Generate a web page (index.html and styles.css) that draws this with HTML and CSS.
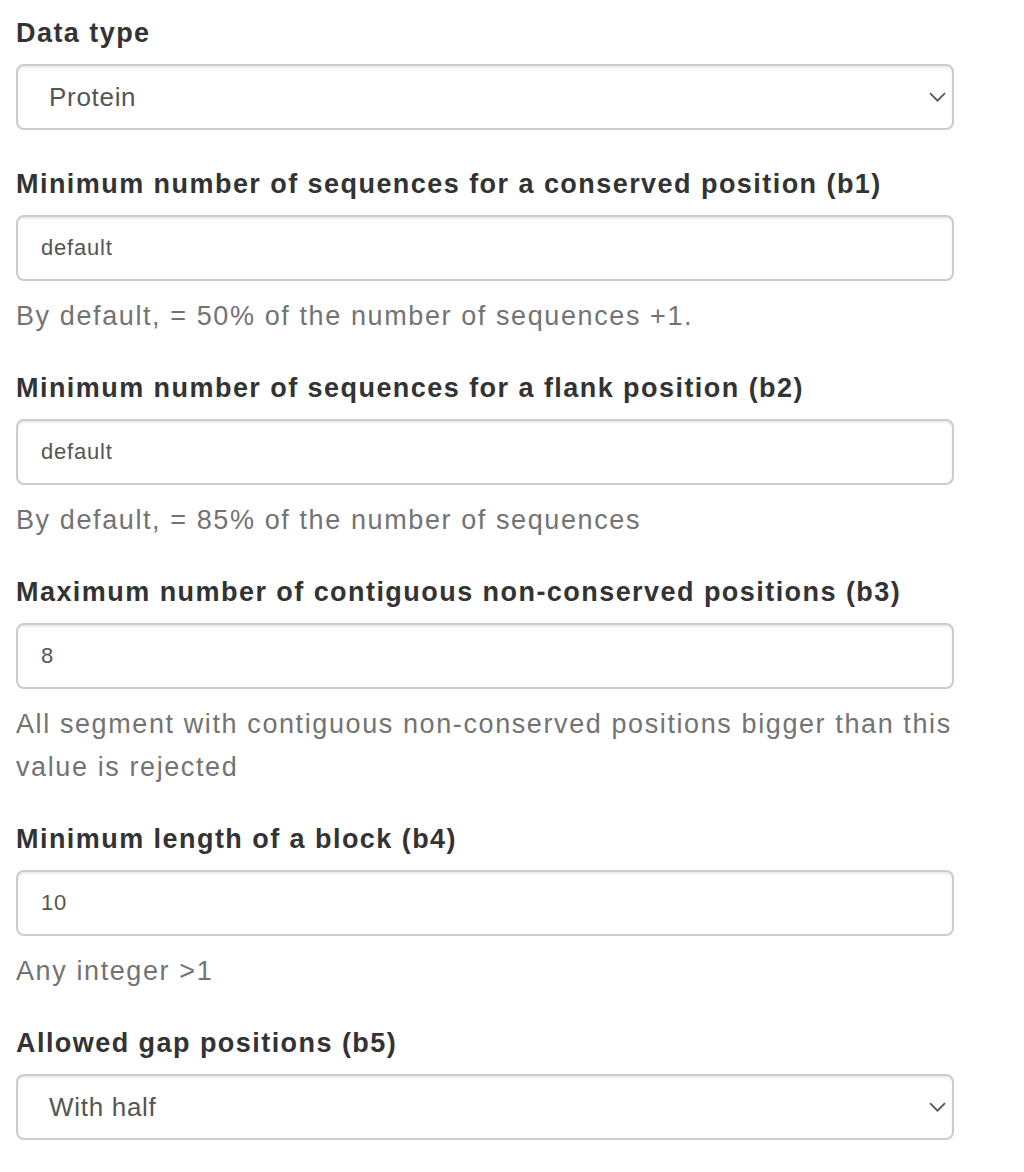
FILE: index.html
```html
<!DOCTYPE html>
<html>
<head>
<meta charset="utf-8">
<link rel="stylesheet" href="styles.css">
</head>
<body>
<form class="form">
  <div class="form-group no-help">
    <label class="label">Data type</label>
    <div class="select">
      <span class="select-value">Protein</span>
      <svg class="chevron" width="17" height="10" viewBox="0 0 17 10"><path d="M1 1.2 L8.5 8.7 L16 1.2" fill="none" stroke="#555" stroke-width="1.7"/></svg>
    </div>
  </div>
  <div class="form-group">
    <label class="label">Minimum number of sequences for a conserved position (b1)</label>
    <div class="input">default</div>
    <p class="help">By default, = 50% of the number of sequences +1.</p>
  </div>
  <div class="form-group">
    <label class="label">Minimum number of sequences for a flank position (b2)</label>
    <div class="input">default</div>
    <p class="help">By default, = 85% of the number of sequences</p>
  </div>
  <div class="form-group">
    <label class="label">Maximum number of contiguous non-conserved positions (b3)</label>
    <div class="input">8</div>
    <p class="help">All segment with contiguous non-conserved positions bigger than this<br>value is rejected</p>
  </div>
  <div class="form-group">
    <label class="label">Minimum length of a block (b4)</label>
    <div class="input">10</div>
    <p class="help">Any integer &gt;1</p>
  </div>
  <div class="form-group no-help">
    <label class="label">Allowed gap positions (b5)</label>
    <div class="select">
      <span class="select-value">With half</span>
      <svg class="chevron" width="17" height="10" viewBox="0 0 17 10"><path d="M1 1.2 L8.5 8.7 L16 1.2" fill="none" stroke="#555" stroke-width="1.7"/></svg>
    </div>
  </div>
</form>
</body>
</html>
```

FILE: styles.css
```css
html, body {
  margin: 0;
  padding: 0;
  background: #fff;
}
body {
  font-family: "Liberation Sans", Arial, Helvetica, sans-serif;
  color: #333;
}
.form {
  width: 938px;
  padding: 15px 0 0 16px;
}
.form-group {
  display: flex;
  flex-direction: column;
}
.form-group.no-help {
  margin-bottom: 36px;
}
.label {
  font-size: 27px;
  letter-spacing: 1.45px;
  font-weight: bold;
  line-height: 36px;
  margin-bottom: 13px;
  color: #333;
  white-space: nowrap;
}
.input, .select {
  box-sizing: border-box;
  height: 66px;
  border: 2px solid #ccc;
  border-radius: 8px;
  box-shadow: inset 0 2px 2px rgba(0,0,0,0.075);
  background: #fff;
  display: flex;
  align-items: center;
}
.input {
  padding: 0 23px;
  font-size: 22px;
  letter-spacing: 0.8px;
  color: #555;
}
.select {
  padding: 0 6px 0 31px;
  font-size: 26px;
  letter-spacing: 0.7px;
  color: #555;
  justify-content: space-between;
}
.chevron {
  display: block;
}
.help {
  margin: 14px 0 32px 0;
  font-size: 27px;
  letter-spacing: 1.6px;
  line-height: 43px;
  color: #737373;
  white-space: nowrap;
}
```
